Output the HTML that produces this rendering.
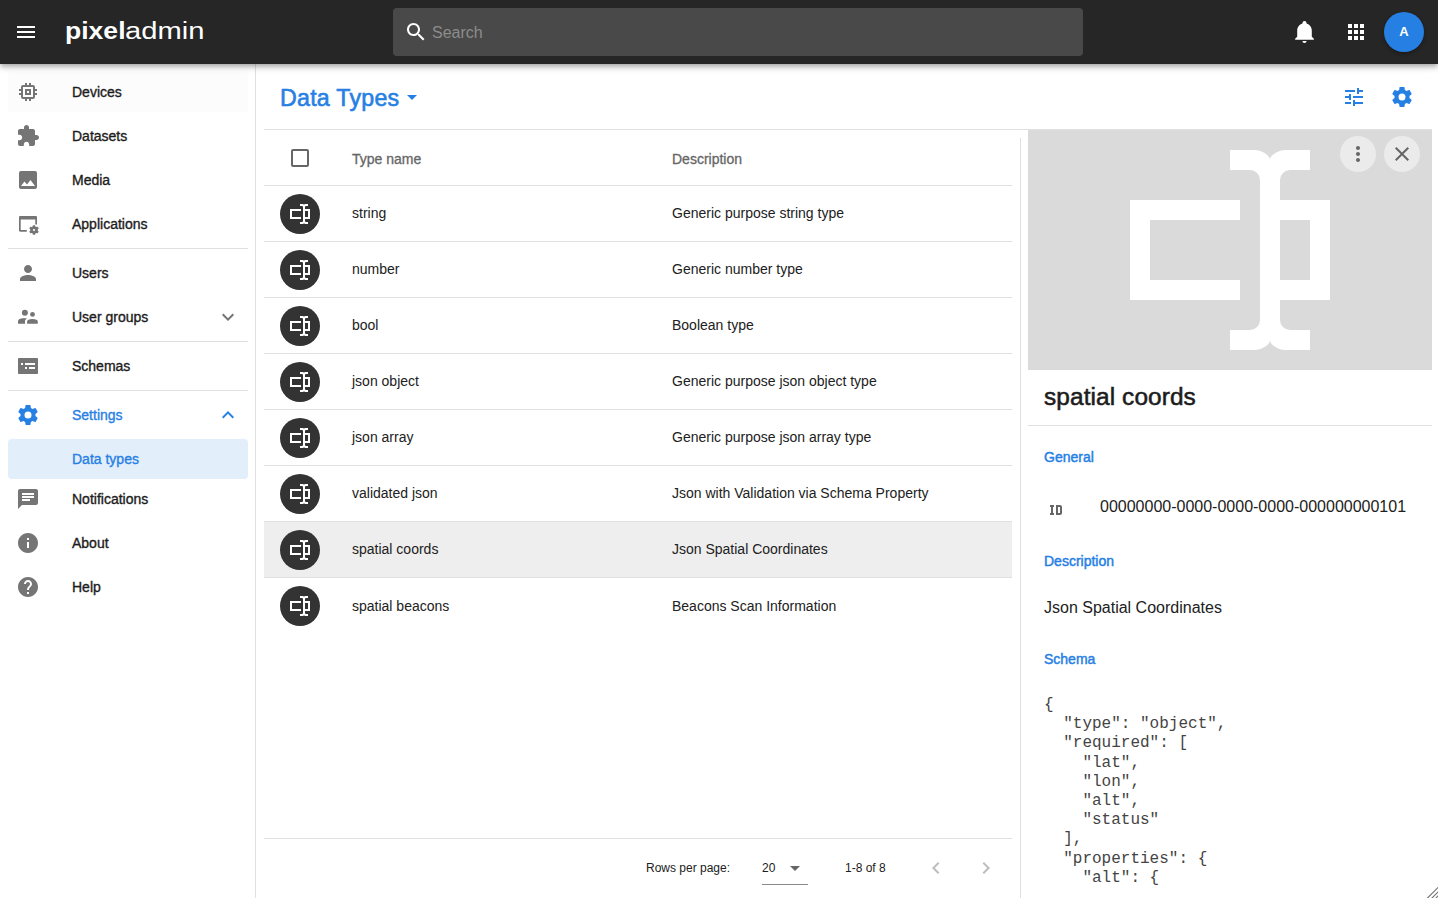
<!DOCTYPE html>
<html><head><meta charset="utf-8">
<style>
*{box-sizing:border-box;margin:0;padding:0}
html,body{width:1438px;height:898px;overflow:hidden;background:#fff;font-family:"Liberation Sans",sans-serif;color:#212121}
.abs{position:absolute}
svg{display:block}
#top{position:absolute;left:0;top:0;width:1438px;height:64px;background:#262626;z-index:5;box-shadow:0 2px 4px -1px rgba(0,0,0,.2),0 4px 5px 0 rgba(0,0,0,.14),0 1px 10px 0 rgba(0,0,0,.12)}
#search{position:absolute;left:393px;top:8px;width:690px;height:48px;background:#494949;border-radius:4px}
#side{position:absolute;left:0;top:64px;width:256px;height:834px;border-right:1px solid #e0e0e0;background:#fff}
.it{position:absolute;left:8px;width:240px;height:40px;border-radius:4px}
.it svg{position:absolute;left:8px;top:8px}
.it span{position:absolute;left:64px;top:0;line-height:40px;font-size:14px;color:#1c1c1c;-webkit-text-stroke:0.35px currentColor}
.div{position:absolute;left:8px;width:240px;height:1px;background:#e0e0e0}
.blue{color:#2680e4}
.it span.blue{color:#2680e4}
.row{position:absolute;left:264px;width:748px;height:56px;border-bottom:1px solid #e0e0e0}
.row .av{position:absolute;left:16px;top:8px;width:40px;height:40px;border-radius:50%;background:#333}
.row .av svg{position:absolute;left:8px;top:8px}
.row .n{position:absolute;left:88px;top:-1px;line-height:56px;font-size:14px;color:#212121}
.row .d{position:absolute;left:408px;top:-1px;line-height:56px;font-size:14px;color:#212121}
.lbl{position:absolute;left:1044px;font-size:14px;color:#2680e4;-webkit-text-stroke:0.45px #2680e4}
pre{position:absolute;left:1044px;top:696px;font-family:"Liberation Mono",monospace;font-size:16px;line-height:19.2px;color:#444}
</style></head>
<body>
<div id="top">
  <svg class="abs" style="left:14px;top:20px" width="24" height="24" viewBox="0 0 24 24"><path fill="#fff" d="M3 18h18v-2H3v2zm0-5h18v-2H3v2zm0-7v2h18V6H3z"/></svg>
  <div class="abs" style="left:65px;top:15px;font-size:23.5px;line-height:32px;color:#fff;white-space:nowrap;font-weight:bold;transform:scaleX(1.13);transform-origin:0 0">pixel</div><div class="abs" style="left:124.5px;top:15px;font-size:23.5px;line-height:32px;color:#fff;white-space:nowrap;transform:scaleX(1.24);transform-origin:0 0">admin</div>
  <div id="search">
    <svg class="abs" style="left:11px;top:12px" width="24" height="24" viewBox="0 0 24 24"><path fill="#fff" d="M15.5 14h-.79l-.28-.27C15.41 12.59 16 11.11 16 9.5 16 5.91 13.09 3 9.5 3S3 5.91 3 9.5 5.91 16 9.5 16c1.61 0 3.09-.59 4.230-1.57l.27.28v.79l5 4.99L20.49 19l-4.99-5zm-6 0C7.01 14 5 11.99 5 9.5S7.01 5 9.5 5 14 7.010 14 9.5 11.99 14 9.5 14z"/></svg>
    <div class="abs" style="left:39px;top:1px;line-height:48px;font-size:16px;color:#8c8c8c">Search</div>
  </div>
  <svg class="abs" style="left:1291.5px;top:19px" width="25" height="25" viewBox="0 0 24 24"><path fill="#fff" d="M21,19V20H3V19L5,17V11C5,7.9 7.03,5.17 10,4.29C10,4.19 10,4.1 10,4A2,2 0 0,1 12,2A2,2 0 0,1 14,4C14,4.1 14,4.19 14,4.29C16.97,5.17 19,7.9 19,11V17L21,19M14,21A2,2 0 0,1 12,23A2,2 0 0,1 10,21"/></svg>
  <svg class="abs" style="left:1344px;top:20px" width="24" height="24" viewBox="0 0 24 24"><path fill="#fff" d="M4 8h4V4H4v4zm6 12h4v-4h-4v4zm-6 0h4v-4H4v4zm0-6h4v-4H4v4zm6 0h4v-4h-4v4zm6-10v4h4V4h-4zm-6 4h4V4h-4v4zm6 6h4v-4h-4v4zm0 6h4v-4h-4v4z"/></svg>
  <div class="abs" style="left:1384px;top:12px;width:40px;height:40px;border-radius:50%;background:#2680e4;color:#fff;font-size:13px;font-weight:bold;text-align:center;line-height:40px;box-shadow:0 2px 4px rgba(0,0,0,.3)">A</div>
</div>

<div id="side"></div>
<div class="it" style="top:72px;background:#fcfcfc"><svg width="24" height="24" viewBox="0 0 24 24"><path fill="#757575" d="M15 9H9v6h6V9zm-2 4h-2v-2h2v2zm8-2V9h-2V7c0-1.1-.9-2-2-2h-2V3h-2v2h-2V3H9v2H7c-1.1 0-2 .9-2 2v2H3v2h2v2H3v2h2v2c0 1.1.9 2 2 2h2v2h2v-2h2v2h2v-2h2c1.1 0 2-.9 2-2v-2h2v-2h-2v-2h2zm-4 6H7V7h10v10z"/></svg><span>Devices</span></div>
<div class="it" style="top:116px"><svg width="24" height="24" viewBox="0 0 24 24"><path fill="#757575" d="M20.5 11H19V7c0-1.1-.9-2-2-2h-4V3.5C13 2.12 11.880 1 10.5 1S8 2.12 8 3.5V5H4c-1.1 0-1.99.9-1.99 2v3.8H3.5c1.49 0 2.7 1.21 2.7 2.7s-1.21 2.7-2.7 2.7H2V20c0 1.1.9 2 2 2h3.8v-1.5c0-1.49 1.21-2.7 2.7-2.7 1.49 0 2.7 1.21 2.7 2.7V22H17c1.1 0 2-.9 2-2v-4h1.5c1.38 0 2.5-1.12 2.5-2.5S21.88 11 20.5 11z"/></svg><span>Datasets</span></div>
<div class="it" style="top:160px"><svg width="24" height="24" viewBox="0 0 24 24"><path fill="#757575" d="M21 19V5c0-1.1-.9-2-2-2H5c-1.1 0-2 .9-2 2v14c0 1.1.9 2 2 2h14c1.1 0 2-.9 2-2zM8.5 13.5l2.5 3.01L14.5 12l4.5 6H5l3.5-4.5z"/></svg><span>Media</span></div>
<div class="it" style="top:204px"><svg width="24" height="24" viewBox="0 0 24 24"><path fill="#757575" d="M4.2 4h15.6c.66 0 1.2.54 1.2 1.2V12.6h-1.7V7.5H4.7V18h6.1v1.7H4.2C3.54 19.7 3 19.16 3 18.5V5.2C3 4.54 3.54 4 4.2 4z"/><g transform="translate(18 18)"><path fill="#757575" d="M-1 -4.8h2l.35 1.3 1.1.6 1.3-.4 1 1.7-.95.95v1.3l.95.95-1 1.7-1.3-.4-1.1.6-.35 1.3h-2l-.35-1.3-1.1-.6-1.3.4-1-1.7.95-.95v-1.3l-.95-.95 1-1.7 1.3.4 1.1-.6z"/><circle r="1.1" fill="#fff"/></g></svg><span>Applications</span></div>
<div class="it" style="top:253px"><svg width="24" height="24" viewBox="0 0 24 24"><path fill="#757575" d="M12 12c2.21 0 4-1.79 4-4s-1.79-4-4-4-4 1.79-4 4 1.79 4 4 4zm0 2c-2.67 0-8 1.34-8 4v2h16v-2c0-2.66-5.33-4-8-4z"/></svg><span>Users</span></div>
<div class="it" style="top:297px"><svg width="24" height="24" viewBox="0 0 24 24"><g fill="#757575"><circle cx="8.9" cy="7.8" r="3"/><circle cx="16.5" cy="9.4" r="2.4"/><path d="M2 18.8V16.2C2 14.3 4.5 13.2 7 13.2H10.9L9 15.6V18.8Z"/><path d="M11.1 18.8V16.5C11.1 15 13 14 16.45 14S21.8 15 21.8 16.5V18.8Z"/></g></svg><span>User groups</span><svg style="left:208px;top:8px" width="24" height="24" viewBox="0 0 24 24"><path fill="#757575" d="M16.59 8.59L12 13.17 7.41 8.59 6 10l6 6 6-6z"/></svg></div>
<div class="it" style="top:346px"><svg width="24" height="24" viewBox="0 0 24 24"><path fill="#757575" d="M3 4h18c.55 0 1 .45 1 1v14c0 .55-.45 1-1 1H3c-.55 0-1-.45-1-1V5c0-.55.45-1 1-1zm2 5v2h2V9H5zm4 0v2h10V9H9zm0 4v2h2v-2H9zm4 0v2h6v-2h-6z"/></svg><span>Schemas</span></div>
<div class="it" style="top:395px"><svg width="24" height="24" viewBox="0 0 24 24"><path fill="#2680e4" d="M12,15.5A3.5,3.5 0 0,1 8.5,12A3.5,3.5 0 0,1 12,8.5A3.5,3.5 0 0,1 15.5,12A3.5,3.5 0 0,1 12,15.5M19.43,12.97C19.47,12.65 19.5,12.33 19.5,12C19.5,11.67 19.47,11.34 19.43,11L21.54,9.37C21.73,9.22 21.78,8.95 21.66,8.73L19.66,5.27C19.54,5.050 19.27,4.96 19.05,5.05L16.56,6.05C16.04,5.66 15.5,5.32 14.87,5.07L14.5,2.42C14.46,2.18 14.25,2 14,2H10C9.75,2 9.54,2.18 9.5,2.42L9.13,5.07C8.5,5.32 7.96,5.66 7.44,6.05L4.95,5.05C4.73,4.96 4.46,5.05 4.34,5.27L2.34,8.73C2.21,8.95 2.27,9.22 2.46,9.37L4.57,11C4.53,11.34 4.5,11.67 4.5,12C4.5,12.33 4.53,12.65 4.57,12.97L2.46,14.63C2.27,14.78 2.21,15.05 2.34,15.27L4.34,18.73C4.46,18.95 4.73,19.03 4.95,18.95L7.44,17.94C7.96,18.34 8.5,18.68 9.13,18.93L9.5,21.58C9.54,21.82 9.75,22 10,22H14C14.25,22 14.46,21.82 14.5,21.58L14.87,18.93C15.5,18.67 16.04,18.34 16.56,17.94L19.05,18.95C19.27,19.03 19.54,18.95 19.66,18.73L21.66,15.27C21.78,15.05 21.73,14.78 21.54,14.63L19.43,12.97Z"/></svg><span class="blue">Settings</span><svg style="left:208px;top:8px" width="24" height="24" viewBox="0 0 24 24"><path fill="#2680e4" d="M12 8l-6 6 1.41 1.41L12 10.83l4.59 4.58L18 14z"/></svg></div>
<div class="it" style="top:439px;background:#e3eefb"><span class="blue">Data types</span></div>
<div class="it" style="top:479px"><svg width="24" height="24" viewBox="0 0 24 24"><path fill="#757575" d="M20 2H4c-1.1 0-1.99.9-1.99 2L2 22l4-4h14c1.1 0 2-.9 2-2V4c0-1.1-.9-2-2-2zM6 9h12v2H6V9zm8 5H6v-2h8v2zm4-6H6V6h12v2z"/></svg><span>Notifications</span></div>
<div class="it" style="top:523px"><svg width="24" height="24" viewBox="0 0 24 24"><path fill="#757575" d="M12 2C6.48 2 2 6.48 2 12s4.48 10 10 10 10-4.48 10-10S17.52 2 12 2zm1 15h-2v-6h2v6zm0-8h-2V7h2v2z"/></svg><span>About</span></div>
<div class="it" style="top:567px"><svg width="24" height="24" viewBox="0 0 24 24"><path fill="#757575" d="M12 2C6.48 2 2 6.48 2 12s4.48 10 10 10 10-4.48 10-10S17.52 2 12 2zm1 17h-2v-2h2v2zm2.07-7.75l-.9.92C13.45 12.9 13 13.5 13 15h-2v-.5c0-1.1.45-2.1 1.17-2.83l1.24-1.26c.37-.36.59-.86.59-1.41 0-1.1-.9-2-2-2s-2 .9-2 2H8c0-2.21 1.79-4 4-4s4 1.79 4 4c0 .88-.36 1.68-.93 2.25z"/></svg><span>Help</span></div>
<div class="div" style="top:248px"></div>
<div class="div" style="top:341px"></div>
<div class="div" style="top:390px"></div>
<div class="abs" style="left:280px;top:81.5px;font-size:23.2px;letter-spacing:0.25px;line-height:32px;-webkit-text-stroke:0.6px #2680e4;color:#2680e4">Data Types</div>
<svg class="abs" style="left:400px;top:85px" width="24" height="24" viewBox="0 0 24 24"><path fill="#2680e4" d="M7 10l5 5 5-5z"/></svg>
<svg class="abs" style="left:1342px;top:85px" width="24" height="24" viewBox="0 0 24 24"><path fill="#2680e4" d="M3 17v2h6v-2H3zM3 5v2h10V5H3zm10 16v-2h8v-2h-8v-2h-2v6h2zM7 9v2H3v2h4v2h2V9H7zm14 4v-2H11v2h10zm-6-4h2V7h4V5h-4V3h-2v6z"/></svg>
<svg class="abs" style="left:1390px;top:85px" width="24" height="24" viewBox="0 0 24 24"><path fill="#2680e4" d="M12,15.5A3.5,3.5 0 0,1 8.5,12A3.5,3.5 0 0,1 12,8.5A3.5,3.5 0 0,1 15.5,12A3.5,3.5 0 0,1 12,15.5M19.43,12.97C19.47,12.65 19.5,12.33 19.5,12C19.5,11.67 19.47,11.34 19.43,11L21.54,9.37C21.73,9.22 21.78,8.95 21.66,8.73L19.66,5.27C19.54,5.050 19.27,4.96 19.05,5.05L16.56,6.05C16.04,5.66 15.5,5.32 14.87,5.07L14.5,2.42C14.46,2.18 14.25,2 14,2H10C9.75,2 9.54,2.18 9.5,2.42L9.13,5.07C8.5,5.32 7.96,5.66 7.44,6.05L4.95,5.05C4.73,4.96 4.46,5.05 4.34,5.27L2.34,8.73C2.21,8.95 2.27,9.22 2.46,9.37L4.57,11C4.53,11.34 4.5,11.67 4.5,12C4.5,12.33 4.53,12.65 4.57,12.97L2.46,14.63C2.27,14.78 2.21,15.05 2.34,15.27L4.34,18.73C4.46,18.95 4.73,19.03 4.95,18.95L7.44,17.94C7.96,18.34 8.5,18.68 9.13,18.93L9.5,21.58C9.54,21.82 9.75,22 10,22H14C14.25,22 14.46,21.82 14.5,21.58L14.87,18.93C15.5,18.67 16.04,18.34 16.56,17.94L19.05,18.95C19.27,19.03 19.54,18.95 19.66,18.73L21.66,15.27C21.78,15.05 21.73,14.78 21.54,14.63L19.43,12.97Z"/></svg>
<div class="abs" style="left:264px;top:129px;width:1168px;height:1px;background:#e0e0e0"></div>
<div class="row" style="top:130px;height:56px"><svg class="abs" style="left:24px;top:16px" width="24" height="24" viewBox="0 0 24 24"><path fill="#666" d="M19 5v14H5V5h14m0-2H5c-1.1 0-2 .9-2 2v14c0 1.1.9 2 2 2h14c1.1 0 2-.9 2-2V5c0-1.1-.9-2-2-2z"/></svg><div class="n" style="color:#666;top:1px;-webkit-text-stroke:0.3px #666">Type name</div><div class="d" style="color:#666;top:1px;-webkit-text-stroke:0.3px #666">Description</div></div>
<div class="row" style="top:186px"><div class="av"><svg width="24" height="24" viewBox="0 0 24 24"><path fill="#fff" d="M17,7H22V17H17V19A1,1 0 0,0 18,20H20V22H17.5C16.95,22 16,21.55 16,21C16,21.55 15.05,22 14.5,22H12V20H14A1,1 0 0,0 15,19V5A1,1 0 0,0 14,4H12V2H14.5C15.05,2 16,2.45 16,3C16,2.45 16.95,2 17.5,2H20V4H18A1,1 0 0,0 17,5V7M2,7H13V9H4V15H13V17H2V7M20,15V9H17V15H20Z"/></svg></div><div class="n">string</div><div class="d">Generic purpose string type</div></div>
<div class="row" style="top:242px"><div class="av"><svg width="24" height="24" viewBox="0 0 24 24"><path fill="#fff" d="M17,7H22V17H17V19A1,1 0 0,0 18,20H20V22H17.5C16.95,22 16,21.55 16,21C16,21.55 15.05,22 14.5,22H12V20H14A1,1 0 0,0 15,19V5A1,1 0 0,0 14,4H12V2H14.5C15.05,2 16,2.45 16,3C16,2.45 16.95,2 17.5,2H20V4H18A1,1 0 0,0 17,5V7M2,7H13V9H4V15H13V17H2V7M20,15V9H17V15H20Z"/></svg></div><div class="n">number</div><div class="d">Generic number type</div></div>
<div class="row" style="top:298px"><div class="av"><svg width="24" height="24" viewBox="0 0 24 24"><path fill="#fff" d="M17,7H22V17H17V19A1,1 0 0,0 18,20H20V22H17.5C16.95,22 16,21.55 16,21C16,21.55 15.05,22 14.5,22H12V20H14A1,1 0 0,0 15,19V5A1,1 0 0,0 14,4H12V2H14.5C15.05,2 16,2.45 16,3C16,2.45 16.95,2 17.5,2H20V4H18A1,1 0 0,0 17,5V7M2,7H13V9H4V15H13V17H2V7M20,15V9H17V15H20Z"/></svg></div><div class="n">bool</div><div class="d">Boolean type</div></div>
<div class="row" style="top:354px"><div class="av"><svg width="24" height="24" viewBox="0 0 24 24"><path fill="#fff" d="M17,7H22V17H17V19A1,1 0 0,0 18,20H20V22H17.5C16.95,22 16,21.55 16,21C16,21.55 15.05,22 14.5,22H12V20H14A1,1 0 0,0 15,19V5A1,1 0 0,0 14,4H12V2H14.5C15.05,2 16,2.45 16,3C16,2.45 16.95,2 17.5,2H20V4H18A1,1 0 0,0 17,5V7M2,7H13V9H4V15H13V17H2V7M20,15V9H17V15H20Z"/></svg></div><div class="n">json object</div><div class="d">Generic purpose json object type</div></div>
<div class="row" style="top:410px"><div class="av"><svg width="24" height="24" viewBox="0 0 24 24"><path fill="#fff" d="M17,7H22V17H17V19A1,1 0 0,0 18,20H20V22H17.5C16.95,22 16,21.55 16,21C16,21.55 15.05,22 14.5,22H12V20H14A1,1 0 0,0 15,19V5A1,1 0 0,0 14,4H12V2H14.5C15.05,2 16,2.45 16,3C16,2.45 16.95,2 17.5,2H20V4H18A1,1 0 0,0 17,5V7M2,7H13V9H4V15H13V17H2V7M20,15V9H17V15H20Z"/></svg></div><div class="n">json array</div><div class="d">Generic purpose json array type</div></div>
<div class="row" style="top:466px"><div class="av"><svg width="24" height="24" viewBox="0 0 24 24"><path fill="#fff" d="M17,7H22V17H17V19A1,1 0 0,0 18,20H20V22H17.5C16.95,22 16,21.55 16,21C16,21.55 15.05,22 14.5,22H12V20H14A1,1 0 0,0 15,19V5A1,1 0 0,0 14,4H12V2H14.5C15.05,2 16,2.45 16,3C16,2.45 16.95,2 17.5,2H20V4H18A1,1 0 0,0 17,5V7M2,7H13V9H4V15H13V17H2V7M20,15V9H17V15H20Z"/></svg></div><div class="n">validated json</div><div class="d">Json with Validation via Schema Property</div></div>
<div class="row" style="top:522px;background:#eeeeee"><div class="av"><svg width="24" height="24" viewBox="0 0 24 24"><path fill="#fff" d="M17,7H22V17H17V19A1,1 0 0,0 18,20H20V22H17.5C16.95,22 16,21.55 16,21C16,21.55 15.05,22 14.5,22H12V20H14A1,1 0 0,0 15,19V5A1,1 0 0,0 14,4H12V2H14.5C15.05,2 16,2.45 16,3C16,2.45 16.95,2 17.5,2H20V4H18A1,1 0 0,0 17,5V7M2,7H13V9H4V15H13V17H2V7M20,15V9H17V15H20Z"/></svg></div><div class="n">spatial coords</div><div class="d">Json Spatial Coordinates</div></div>
<div class="row" style="top:578px;border-bottom:none"><div class="av"><svg width="24" height="24" viewBox="0 0 24 24"><path fill="#fff" d="M17,7H22V17H17V19A1,1 0 0,0 18,20H20V22H17.5C16.95,22 16,21.55 16,21C16,21.55 15.05,22 14.5,22H12V20H14A1,1 0 0,0 15,19V5A1,1 0 0,0 14,4H12V2H14.5C15.05,2 16,2.45 16,3C16,2.45 16.95,2 17.5,2H20V4H18A1,1 0 0,0 17,5V7M2,7H13V9H4V15H13V17H2V7M20,15V9H17V15H20Z"/></svg></div><div class="n" style="top:0">spatial beacons</div><div class="d" style="top:0">Beacons Scan Information</div></div>
<div class="abs" style="left:264px;top:838px;width:748px;height:1px;background:#e0e0e0"></div>
<div class="abs" style="left:646px;top:858px;font-size:12px;line-height:20px;color:#212121">Rows per page:</div>
<div class="abs" style="left:762px;top:858px;font-size:12px;line-height:20px;color:#212121">20</div>
<svg class="abs" style="left:783px;top:856px" width="24" height="24" viewBox="0 0 24 24"><path fill="#666" d="M7 10l5 5 5-5z"/></svg>
<div class="abs" style="left:762px;top:884px;width:46px;height:1px;background:#8a8a8a"></div>
<div class="abs" style="left:845px;top:858px;font-size:12px;line-height:20px;color:#212121">1-8 of 8</div>
<svg class="abs" style="left:924px;top:856px" width="24" height="24" viewBox="0 0 24 24"><path fill="#bdbdbd" d="M15.41 7.41L14 6l-6 6 6 6 1.41-1.41L10.83 12z"/></svg>
<svg class="abs" style="left:974px;top:856px" width="24" height="24" viewBox="0 0 24 24"><path fill="#bdbdbd" d="M10 6L8.59 7.41 13.17 12l-4.58 4.59L10 18l6-6z"/></svg>
<div class="abs" style="left:1020px;top:138px;width:1px;height:760px;background:#e0e0e0"></div>
<div class="abs" style="left:1028px;top:130px;width:404px;height:240px;background:#dadada"><svg class="abs" style="left:82px;top:0" width="240" height="240" viewBox="0 0 24 24"><path fill="#fff" d="M17,7H22V17H17V19A1,1 0 0,0 18,20H20V22H17.5C16.95,22 16,21.55 16,21C16,21.55 15.05,22 14.5,22H12V20H14A1,1 0 0,0 15,19V5A1,1 0 0,0 14,4H12V2H14.5C15.05,2 16,2.45 16,3C16,2.45 16.95,2 17.5,2H20V4H18A1,1 0 0,0 17,5V7M2,7H13V9H4V15H13V17H2V7M20,15V9H17V15H20Z"/></svg><div class="abs" style="left:312px;top:6px;width:36px;height:36px;border-radius:50%;background:#ebebeb"><svg class="abs" style="left:6px;top:6px" width="24" height="24" viewBox="0 0 24 24"><path fill="#666" d="M12 8c1.1 0 2-.9 2-2s-.9-2-2-2-2 .9-2 2 .9 2 2 2zm0 2c-1.1 0-2 .9-2 2s.9 2 2 2 2-.9 2-2-.9-2-2-2zm0 6c-1.1 0-2 .9-2 2s.9 2 2 2 2-.9 2-2-.9-2-2-2z"/></svg></div><div class="abs" style="left:356px;top:6px;width:36px;height:36px;border-radius:50%;background:#ebebeb"><svg class="abs" style="left:6px;top:6px" width="24" height="24" viewBox="0 0 24 24"><path fill="#666" d="M19 6.41L17.59 5 12 10.59 6.41 5 5 6.41 10.59 12 5 17.59 6.41 19 12 13.41 17.59 19 19 17.59 13.41 12z"/></svg></div></div>
<div class="abs" style="left:1044px;top:381px;font-size:24.4px;line-height:32px;letter-spacing:0.1px;-webkit-text-stroke:0.55px #1c1c1c;color:#1c1c1c">spatial coords</div>
<div class="abs" style="left:1028px;top:425px;width:404px;height:1px;background:#e0e0e0"></div>
<div class="lbl" style="top:448px;line-height:18px">General</div>
<svg class="abs" style="left:1044px;top:498px" width="24" height="24" viewBox="0 0 24 24"><path fill="#666" d="M10 7V9H9V15H10V17H6V15H7V9H6V7H10M16 7C17.11 7 18 7.9 18 9V15C18 16.11 17.11 17 16 17H12V7M16 9H14V15H16V9Z"/></svg>
<div class="abs" style="left:1100px;top:497px;font-size:16px;line-height:20px;color:#212121">00000000-0000-0000-0000-000000000101</div>
<div class="lbl" style="top:552px;line-height:18px">Description</div>
<div class="abs" style="left:1044px;top:598px;font-size:16px;line-height:20px;color:#212121">Json Spatial Coordinates</div>
<div class="lbl" style="top:650px;line-height:18px">Schema</div>
<pre>{
  &quot;type&quot;: &quot;object&quot;,
  &quot;required&quot;: [
    &quot;lat&quot;,
    &quot;lon&quot;,
    &quot;alt&quot;,
    &quot;status&quot;
  ],
  &quot;properties&quot;: {
    &quot;alt&quot;: {</pre>
<svg class="abs" style="left:1424px;top:884px" width="14" height="14" viewBox="0 0 14 14"><path stroke="#777" stroke-width="1.2" d="M3 14.5L14.5 3M7.5 14.5L14.5 7.5M11.5 14.5L14.5 11.5"/></svg>
</body></html>
